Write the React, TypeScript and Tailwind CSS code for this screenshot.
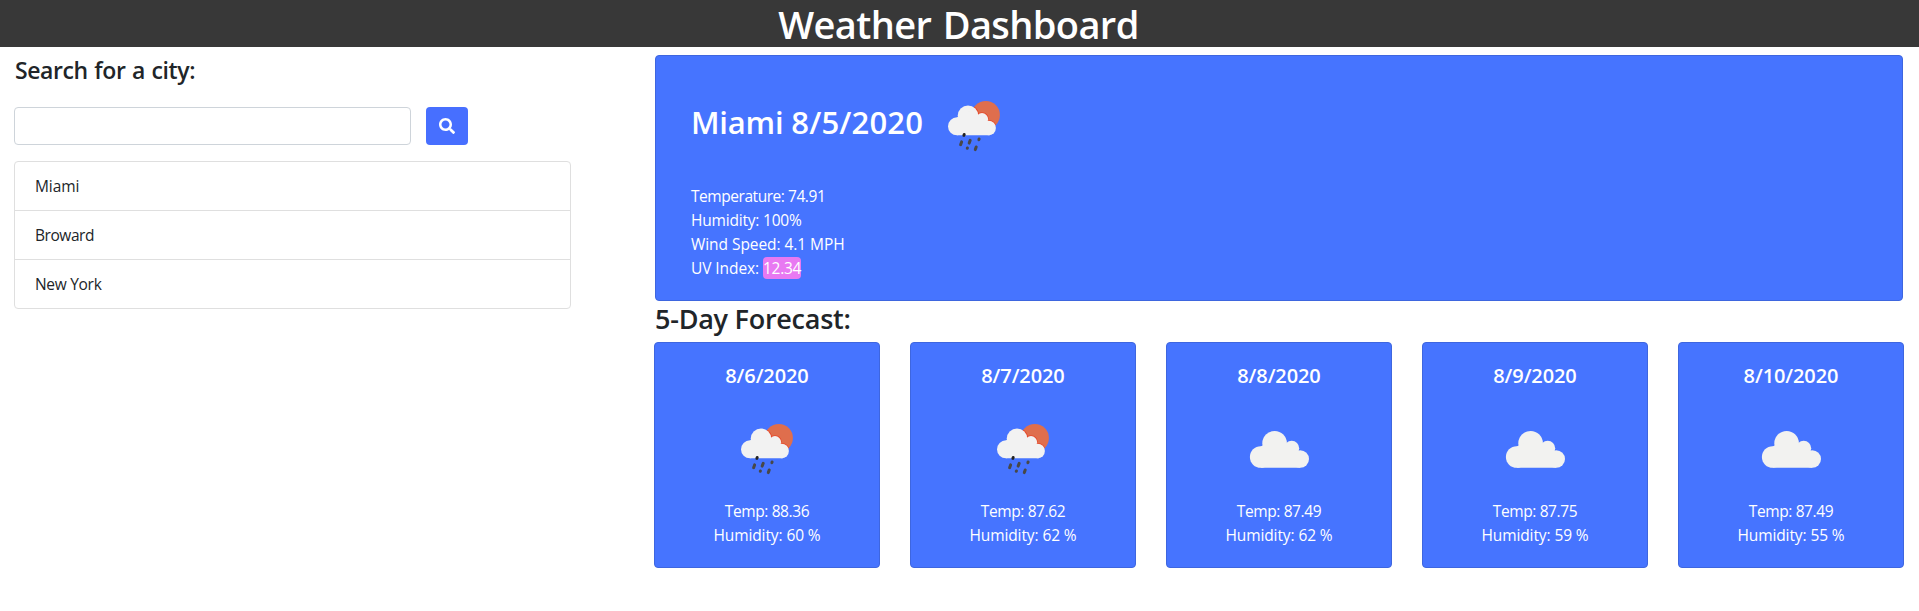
import React from "react";

type Icon = "rain" | "cloud";

const history = [
  { city: "Miami", tracking: "tracking-[-0.1px]" },
  { city: "Broward", tracking: "tracking-[-0.45px]" },
  { city: "New York", tracking: "tracking-[-0.3px]" },
];

const forecast: { date: string; icon: Icon; temp: string; humidity: string }[] = [
  { date: "8/6/2020", icon: "rain", temp: "88.36", humidity: "60" },
  { date: "8/7/2020", icon: "rain", temp: "87.62", humidity: "62" },
  { date: "8/8/2020", icon: "cloud", temp: "87.49", humidity: "62" },
  { date: "8/9/2020", icon: "cloud", temp: "87.75", humidity: "59" },
  { date: "8/10/2020", icon: "cloud", temp: "87.49", humidity: "55" },
];

function RainShape() {
  return (
    <>
      <circle cx="33" cy="49.3" r="9" />
      <circle cx="44" cy="38.7" r="10.3" />
      <circle cx="58" cy="42.2" r="6.1" />
      <circle cx="64.6" cy="51" r="7.3" />
      <path d="M33 40.5L44 34L58 40L66 46V58.3H33Z" />
    </>
  );
}

function WeatherIcon({ icon }: { icon: Icon }) {
  if (icon === "cloud") {
    return (
      <svg width="100" height="100" viewBox="0 0 100 100" className="shrink-0" fill="#f2f2f0">
        <circle cx="31.7" cy="57" r="10.8" />
        <circle cx="45.6" cy="43.2" r="12.3" />
        <circle cx="62.7" cy="48.3" r="7.5" />
        <circle cx="71.2" cy="59" r="8.8" />
        <path d="M31.7 46.5L45 40L62 47L71.2 52V67.8H31.7Z" />
      </svg>
    );
  }
  return (
    <svg width="100" height="100" viewBox="0 0 100 100" className="shrink-0">
      <defs>
        <clipPath id="sun">
          <circle cx="61.8" cy="38" r="14.1" />
        </clipPath>
      </defs>
      <circle cx="61.8" cy="38" r="14.1" fill="#df6e4d" />
      <g clipPath="url(#sun)" fill="#e5492b" stroke="#e5492b" strokeWidth="1.6">
        <RainShape />
      </g>
      <g fill="#f2f2f2">
        <RainShape />
      </g>
      <g stroke="#484848" strokeWidth="3" strokeLinecap="round">
        <path d="M40.2 57.5L39.9 58.4" stroke="#222" />
        <path d="M37.6 64.9L36.6 67.7" />
        <path d="M46.2 63.3L45.2 66.1" />
        <path d="M55.1 62L54.9 62.7" />
        <path d="M43.4 71L43.3 71.3" />
        <path d="M52.2 70L51.3 72.6" />
      </g>
    </svg>
  );
}

export default function App() {
  return (
    <div className="min-h-[611px] w-full bg-white font-['Open_Sans','Noto_Sans',sans-serif] text-[15.5px] leading-6 text-[#212529]">
      <header className="flex h-[47px] items-start justify-center bg-[#383838] pt-px">
        <h1 className="pr-[2px] text-[38px] leading-[46px] font-semibold tracking-[-0.6px] text-white [word-spacing:2px]">
          Weather Dashboard
        </h1>
      </header>

      <div className="flex">
        <aside className="w-[571px] shrink-0 pt-[9px] pl-[14px]">
          <h4 className="pl-px text-[23px] leading-[29px] font-semibold tracking-[-0.4px] [word-spacing:1px]">
            Search for a city:
          </h4>
          <form className="mt-[22px] flex gap-[15px]" onSubmit={(e) => e.preventDefault()}>
            <input
              aria-label="City"
              className="h-[38px] w-[397px] rounded-[4px] border border-[#ced4da] bg-white px-3 outline-none"
            />
            <button
              aria-label="Search"
              className="flex h-[38px] w-[42px] items-center justify-center rounded-[4px] bg-[#476fff] text-white"
            >
              <svg width="16" height="16" viewBox="0 0 512 512" fill="currentColor">
                <path d="M505 442.7L405.3 343c-4.500-4.500-10.600-7-17-7H372c27.600-35.300 44-79.700 44-128C416 93.100 322.900 0 208 0S0 93.100 0 208s93.100 208 208 208c48.300 0 92.700-16.400 128-44v16.300c0 6.400 2.500 12.500 7 17l99.700 99.700c9.400 9.400 24.600 9.400 33.900 0l28.300-28.300c9.400-9.400 9.400-24.600.1-34zM208 336c-70.700 0-128-57.200-128-128 0-70.700 57.200-128 128-128 70.700 0 128 57.200 128 128 0 70.700-57.200 128-128 128z" />
              </svg>
            </button>
          </form>
          <ul className="mt-4 divide-y divide-[#dfdfdf] rounded-[4px] border border-[#dfdfdf]">
            {history.map(({ city, tracking }) => (
              <li key={city} className={`h-[49px] px-5 py-3 last:h-12 ${tracking}`}>
                {city}
              </li>
            ))}
          </ul>
        </aside>

        <main className="ml-[83px] w-[1250px] pt-2">
          <section className="mx-px h-[246px] rounded-[4px] border border-[#3e66df] bg-[#4674ff] pt-[21px] pl-[35px] text-white">
            <div className="flex h-[100px] items-center">
              <h2 className="w-[233px] pb-[11px] text-[31px] leading-[38px] font-semibold whitespace-nowrap">
                <span className="tracking-[-0.2px]">Miami </span>
                <span className="tracking-[0.15px]">8/5/2020</span>
              </h2>
              <WeatherIcon icon="rain" />
            </div>
            <div className="mt-[7px]">
              <p className="tracking-[-0.45px]">Temperature: 74.91</p>
              <p className="tracking-[-0.2px]">Humidity: 100%</p>
              <p className="tracking-[-0.06px]">Wind Speed: 4.1 MPH</p>
              <p className="tracking-[-0.08px]">
                UV Index: <span className="rounded-[4px] bg-[#e879f2] tracking-[-0.3px]">12.34</span>
              </p>
            </div>
          </section>

          <h3 className="h-[41px] pt-px pl-px text-[27px] leading-[34px] font-semibold tracking-[-0.25px]">
            5-Day Forecast:
          </h3>

          <section className="flex gap-[30px]">
            {forecast.map((day) => (
              <article
                key={day.date}
                className="flex h-[226px] w-[226px] flex-col items-center rounded-[4px] border border-[#3e66df] bg-[#4674ff] pt-[21px] text-white"
              >
                <h5 className="mb-3 text-xl leading-6 font-semibold tracking-[-0.1px]">{day.date}</h5>
                <WeatherIcon icon={day.icon} />
                <div className="-mt-px text-center">
                  <p className="tracking-[-0.4px]">Temp: {day.temp}</p>
                  <p className="tracking-[-0.1px]">Humidity: {day.humidity} %</p>
                </div>
              </article>
            ))}
          </section>
        </main>
      </div>
    </div>
  );
}
